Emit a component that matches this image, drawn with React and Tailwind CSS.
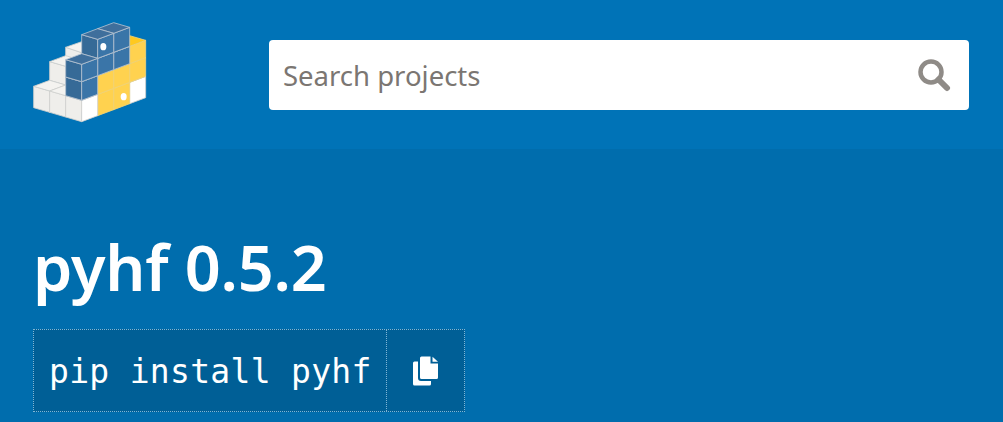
const p = (i, j, k) => {
  const levels = [0, 64, 120, 172, 229];
  return [185 + 48 * i - 48 * j, 335 - 18 * i - 14 * j - levels[k]];
};
const poly = (pts) => pts.map((q) => q.join(",")).join(" ");

function Box({ i, j, k, left, right, top, edge }) {
  return (
    <g stroke={edge} strokeWidth="2.500" strokeLinejoin="round">
      <polygon fill={left} points={poly([p(i, j, k), p(i, j + 1, k), p(i, j + 1, k + 1), p(i, j, k + 1)])} />
      <polygon fill={right} points={poly([p(i, j, k), p(i + 1, j, k), p(i + 1, j, k + 1), p(i, j, k + 1)])} />
      <polygon fill={top} points={poly([p(i, j, k + 1), p(i + 1, j, k + 1), p(i + 1, j + 1, k + 1), p(i, j + 1, k + 1)])} />
    </g>
  );
}

const gray = { left: "#efeeeb", right: "#ffffff", top: "#f4f3f0", edge: "#cfd0ce" };
const blue = { left: "#366a97", right: "#3a75a8", top: "#3f6f9c", edge: "#b4c2d0" };
const yellow = { left: "#ffd343", right: "#ffd24f", top: "#ffc91f", edge: "#efd27a" };

// back to front, so nearer boxes cover farther ones
const boxes = [
  { i: 1, j: 2, k: 1, ...gray },
  { i: 0, j: 2, k: 0, ...gray },
  { i: 0, j: 1, k: 0, ...gray },
  { i: 3, j: 0, k: 0, ...gray },
  { i: 3, j: 0, k: 1, ...yellow },
  { i: 3, j: 0, k: 2, ...yellow },
  { i: 2, j: 0, k: 0, ...yellow },
  { i: 2, j: 0, k: 1, ...yellow },
  { i: 2, j: 0, k: 2, ...blue },
  { i: 2, j: 0, k: 3, ...blue },
  { i: 1, j: 0, k: 0, ...yellow },
  { i: 1, j: 0, k: 1, ...yellow },
  { i: 1, j: 0, k: 2, ...blue },
  { i: 1, j: 0, k: 3, ...blue },
  { i: 0, j: 0, k: 0, ...gray },
  { i: 0, j: 0, k: 1, ...blue },
  { i: 0, j: 0, k: 2, ...blue },
];

function Logo() {
  return (
    <svg width="140" height="120" viewBox="0 0 420 360" className="block shrink-0">
      {/* highest step of the stair sits half a level down, so it is not a full box */}
      <g stroke={gray.edge} strokeWidth="2.500" strokeLinejoin="round">
        <polygon fill={gray.left} points="137,112 185,128 185,170 137,150" />
        <polygon fill={gray.top} points="137,112 185,95 232,110 185,128" />
      </g>
      {boxes.map((b) => (
        <Box key={`${b.i}-${b.j}-${b.k}`} {...b} />
      ))}
      <ellipse cx="250" cy="110" rx="9" ry="11" fill="#fff" />
      <ellipse cx="311" cy="260" rx="9" ry="11" fill="#fff" />
    </svg>
  );
}

function CopyIcon() {
  return (
    <svg width="26" height="30" viewBox="0 0 26 30" fill="#fff" className="block">
      <path d="M0 7 Q0 5.500 1.500 5.500 H5 V22 Q5 25 8 25 H18 V28 Q18 29.500 16.500 29.500 H1.500 Q0 29.500 0 28 Z" />
      <path d="M7 2 Q7 0.500 8.500 0.500 H17.500 V7.500 H25 V21.500 Q25 23 23.500 23 H8.500 Q7 23 7 21.500 Z" />
      <path d="M19.500 0.800 L25 5.800 H19.500 Z" />
    </svg>
  );
}

export default function App() {
  return (
    <div className="h-[422px] w-[1003px] overflow-hidden bg-[#006dad] font-['Noto_Sans',sans-serif]">
      <header className="flex h-[149px] items-start bg-[#0073b7]">
        <div className="ml-[20px] mt-[10px] w-[249px]">
          <Logo />
        </div>
        <div className="mt-[40px] flex h-[70px] w-[700px] items-center justify-between rounded-[4px] bg-white pl-[14px] pr-[18px]">
          <span className="pt-[1px] text-[27.5px] text-[#7b7672]">Search projects</span>
          <svg width="34" height="34" viewBox="0 0 34 34" fill="none" stroke="#8f8b87" className="block">
            <circle cx="14" cy="14" r="10.500" strokeWidth="4.500" />
            <path d="M21.500 21.500 L30 30" strokeWidth="6" strokeLinecap="round" />
          </svg>
        </div>
      </header>
      <main className="pl-[33px] pt-[78px]">
        <h1 className="text-[63px] font-semibold leading-[80px] tracking-[-0.2px] text-white">pyhf 0.5.2</h1>
        <div className="mt-[22px] flex h-[83px] w-[432px] border border-dotted border-[#7fb6d6] bg-[#005f96]">
          <span className="flex w-[353px] items-center border-r border-dotted border-[#7fb6d6] pl-[15px] pt-[2px] font-['DejaVu_Sans_Mono',monospace] text-[33px] tracking-[0.3px] text-white">
            pip install pyhf
          </span>
          <span className="flex flex-1 items-center justify-center">
            <CopyIcon />
          </span>
        </div>
      </main>
    </div>
  );
}
